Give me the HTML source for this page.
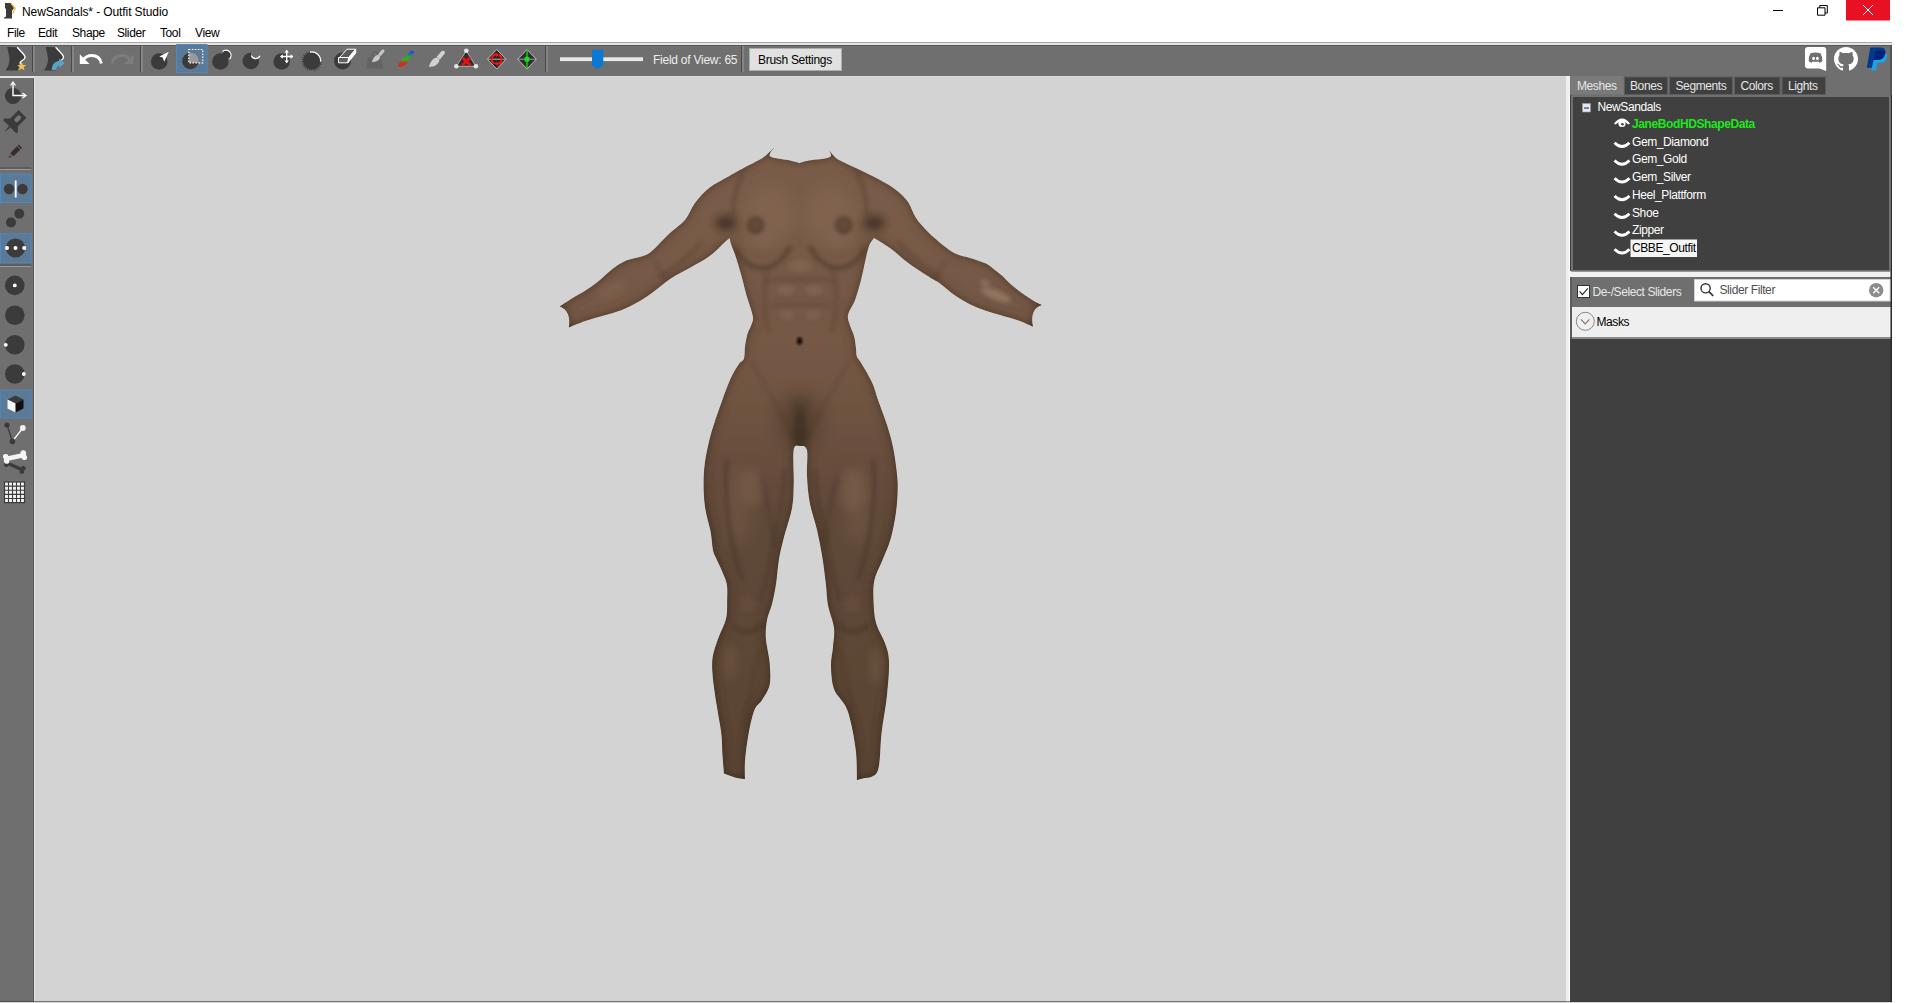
<!DOCTYPE html>
<html><head><meta charset="utf-8">
<style>
*{margin:0;padding:0;box-sizing:border-box}
html,body{width:1920px;height:1003px;overflow:hidden;background:#fff;font-family:"Liberation Sans",sans-serif;font-size:12px;color:#000}
.a{position:absolute;white-space:nowrap;line-height:14px;letter-spacing:-0.4px}
#svg{position:absolute;left:0;top:0}
.tab{color:#e6e6e6}
.tr{color:#fff}
</style></head><body>
<svg id="svg" width="1920" height="1003" viewBox="0 0 1920 1003">
<defs>
<linearGradient id="skin" x1="0" y1="148" x2="0" y2="780" gradientUnits="userSpaceOnUse">
<stop offset="0" stop-color="#7a5d49"/>
<stop offset="0.35" stop-color="#735744"/>
<stop offset="0.6" stop-color="#5f4838"/>
<stop offset="1" stop-color="#5a4434"/>
</linearGradient>
<linearGradient id="rainbow" x1="0" y1="17" x2="0" y2="0" gradientUnits="userSpaceOnUse">
<stop offset="0" stop-color="#e02020"/>
<stop offset="0.25" stop-color="#d03020"/>
<stop offset="0.45" stop-color="#20c020"/>
<stop offset="0.6" stop-color="#20b020"/>
<stop offset="0.8" stop-color="#2060d0"/>
<stop offset="1" stop-color="#2030e0"/>
</linearGradient>
<g id="brush">
<path d="M0,17 C0.5,14 2,11 4.3,9 C5.5,8 6.8,7.6 7.9,7.8 C9.5,8.2 10.5,9.5 10.3,10.8 C10,12.5 8.5,14.3 6.3,15.5 C4.5,16.5 2,16.9 0,17 Z"/>
<path d="M7.6,7 L12.2,1.6 C13,0.6 14.8,0.5 15.6,1.3 C16.2,2 16,3.2 15.2,4.2 L10.8,9.4 Z"/>
</g>
<g id="profile">
<path d="M1.8,0 L11.6,0.3 C14,2.8 17,6 18.6,8 C19.8,9.6 19.6,11.4 18.2,12.5 C17,13.4 15.2,14 14.8,15.3 L14.6,17 L12,23.6 L0,23.6 C2,20.5 3.8,17.5 4,13 C4,8.5 2.3,4 1.8,0 Z" fill="#3b3b3b"/>
<path d="M11.6,0.3 C14,2.8 17,6 18.6,8 C19.8,9.6 19.6,11.4 18.2,12.5 C17,13.4 15.2,14 14.8,15.3 L14.6,17.5" fill="none" stroke="#fff" stroke-width="1.3"/>
</g>
</defs>
<!-- title bar -->
<rect x="0" y="0" width="1920" height="43" fill="#ffffff"/>
<rect x="0" y="42" width="1892" height="1" fill="#a8a8a8"/>
<rect x="0" y="43" width="1892" height="2" fill="#e3e3e3"/>
<!-- toolbar -->
<rect x="0" y="45" width="1892" height="31" fill="#6f6f6f"/>
<rect x="0" y="45" width="1892" height="1" fill="#5a5a5a"/>
<!-- left toolbar -->
<rect x="0" y="76" width="35" height="927" fill="#e2e2e2"/>
<rect x="0" y="78" width="33" height="925" fill="#6f6f6f"/>
<rect x="33" y="78" width="1" height="925" fill="#595959"/>
<!-- viewport -->
<rect x="35" y="76" width="1531" height="927" fill="#d3d3d3"/>
<rect x="1566" y="76" width="4" height="927" fill="#f0f0f0"/>
<rect x="1569" y="95" width="1" height="908" fill="#ffffff"/>
<rect x="35" y="76" width="1531" height="1" fill="#dadada"/>
<!-- right panel -->
<rect x="1570" y="76" width="322" height="927" fill="#404040"/>
<rect x="1570" y="76" width="322" height="19" fill="#6f6f6f"/>
<rect x="1570" y="271" width="322" height="6" fill="#f0f0f0"/>
<rect x="1570" y="277" width="322" height="30" fill="#6f6f6f"/>
<rect x="1570" y="307" width="322" height="30" fill="#efefef"/>
<rect x="1570" y="337" width="322" height="2" fill="#8a8a8a"/>
<rect x="1570" y="277" width="2" height="62" fill="#5c5c5c"/>
<rect x="1890" y="45" width="2" height="50" fill="#555555"/>
<rect x="1890.5" y="95" width="1.5" height="907" fill="#2a2a2a"/>
<rect x="0" y="1001" width="1892" height="1" fill="#333333" opacity="0.6"/>
<rect x="0" y="1002" width="1892" height="1" fill="#d8d8d8"/>
<!-- tree panel -->
<rect x="1572" y="96" width="318" height="175" fill="#404040" stroke="#7b7e82" stroke-width="1.6"/>
<!-- tabs -->
<rect x="1570.5" y="76" width="53" height="18.5" fill="#7a7a7a"/>
<rect x="1624.5" y="77" width="43" height="17.5" fill="#404040" stroke="#5c5c5c" stroke-width="1"/>
<rect x="1669.5" y="77" width="63" height="17.5" fill="#404040" stroke="#5c5c5c" stroke-width="1"/>
<rect x="1734.5" y="77" width="45.5" height="17.5" fill="#404040" stroke="#5c5c5c" stroke-width="1"/>
<rect x="1782" y="77" width="43.5" height="17.5" fill="#404040" stroke="#5c5c5c" stroke-width="1"/>
<filter id="rim" x="-10%" y="-10%" width="120%" height="120%">
<feGaussianBlur in="SourceAlpha" stdDeviation="5" result="b"/>
<feComposite in="SourceAlpha" in2="b" operator="arithmetic" k2="1" k3="-1" result="edge"/>
<feFlood flood-color="#1e140c" flood-opacity="0.75"/>
<feComposite in2="edge" operator="in" result="shade"/>
<feMerge><feMergeNode in="SourceGraphic"/><feMergeNode in="shade"/></feMerge>
</filter>
<filter id="bl1" x="-50%" y="-50%" width="200%" height="200%"><feGaussianBlur stdDeviation="1"/></filter>
<filter id="bl2" x="-50%" y="-50%" width="200%" height="200%"><feGaussianBlur stdDeviation="2"/></filter>
<filter id="bl4" x="-50%" y="-50%" width="200%" height="200%"><feGaussianBlur stdDeviation="4"/></filter>
<filter id="bl8" x="-50%" y="-50%" width="200%" height="200%"><feGaussianBlur stdDeviation="8"/></filter>
<clipPath id="bclip"><path d="M775.5,146.5 C775.5,146.5 767.6,154.0 770.0,156.3 C772.4,158.7 785.1,159.4 790.0,160.6 C794.9,161.8 799.4,163.2 799.4,163.2 C799.4,163.2 803.6,161.7 808.8,160.6 C813.9,159.5 827.4,159.2 830.3,156.8 C833.2,154.5 826.3,146.5 826.3,146.5 C826.3,146.5 830.7,152.7 833.0,155.0 C835.3,157.3 835.5,158.0 840.0,160.5 C844.5,163.0 853.3,166.8 860.0,170.0 C866.7,173.2 874.0,176.7 880.0,180.0 C886.0,183.3 891.3,186.3 896.0,190.0 C900.7,193.7 904.7,197.3 908.0,202.0 C911.3,206.7 912.7,213.0 916.0,218.0 C919.3,223.0 923.3,227.3 928.0,232.0 C932.7,236.7 939.3,242.3 944.0,246.0 C948.7,249.7 952.0,252.0 956.3,254.0 C960.6,256.0 965.1,256.4 970.0,258.0 C974.9,259.6 981.9,261.7 985.9,263.6 C989.9,265.5 991.1,267.2 993.8,269.2 C996.4,271.2 999.1,273.1 1001.8,275.5 C1004.5,277.9 1006.5,280.6 1009.8,283.5 C1013.1,286.4 1017.8,290.2 1021.8,293.1 C1025.8,296.0 1030.5,299.1 1033.8,301.1 C1037.1,303.1 1041.7,305.0 1041.7,305.0 C1041.7,305.0 1037.5,306.8 1036.1,308.3 C1034.6,309.8 1033.7,311.8 1033.0,313.8 C1032.3,315.8 1032.2,318.1 1032.2,320.2 C1032.2,322.3 1033.0,326.6 1033.0,326.6 C1033.0,326.6 1023.0,322.1 1017.8,320.2 C1012.6,318.3 1007.1,317.0 1001.8,315.4 C996.5,313.8 991.2,312.5 985.9,310.7 C980.6,308.9 974.8,306.7 969.9,304.3 C965.0,301.9 960.3,299.0 956.3,296.3 C952.3,293.6 949.0,290.7 946.0,288.3 C943.0,285.9 940.7,283.8 938.0,282.0 C935.3,280.2 935.0,280.7 930.0,277.5 C925.0,274.3 914.7,267.7 908.0,262.8 C901.3,257.9 895.7,252.1 890.0,248.0 C884.3,243.9 874.0,238.0 874.0,238.0 C874.0,238.0 870.5,242.0 869.0,246.0 C867.5,250.0 866.3,256.3 865.0,262.0 C863.7,267.7 862.7,273.7 861.0,280.0 C859.3,286.3 857.2,294.2 855.0,300.0 C852.8,305.8 848.8,310.8 848.0,315.0 C847.2,319.2 849.0,322.0 850.0,325.5 C851.0,329.0 853.0,332.4 854.0,336.0 C855.0,339.6 855.3,343.6 855.8,347.0 C856.3,350.4 856.0,354.1 856.8,356.6 C857.6,359.1 858.8,359.2 860.5,362.0 C862.2,364.8 865.1,369.4 867.2,373.3 C869.3,377.2 871.4,380.9 873.2,385.3 C875.0,389.8 875.7,393.4 878.0,400.0 C880.3,406.6 884.5,417.2 887.0,425.0 C889.5,432.8 891.4,439.5 893.0,447.0 C894.6,454.5 895.7,463.2 896.5,470.0 C897.3,476.8 897.8,481.0 897.7,488.0 C897.6,495.0 897.2,503.5 896.0,512.0 C894.8,520.5 893.0,530.7 890.6,539.0 C888.2,547.3 884.3,555.2 881.6,562.0 C878.9,568.8 875.8,573.5 874.4,580.0 C873.0,586.5 873.2,593.8 873.5,601.0 C873.8,608.2 874.0,615.8 876.0,623.0 C878.0,630.2 883.1,637.5 885.3,644.0 C887.5,650.5 888.7,653.5 889.0,662.0 C889.3,670.5 888.2,683.2 887.0,695.0 C885.8,706.8 883.0,720.3 881.5,733.0 C880.0,745.7 880.5,763.5 877.7,771.0 C874.9,778.5 864.5,778.0 864.5,778.0 C864.5,778.0 857.0,780.0 857.0,780.0 C857.0,780.0 857.0,761.5 856.0,752.0 C855.0,742.5 852.8,730.7 851.0,723.0 C849.2,715.3 848.3,711.7 845.5,706.0 C842.7,700.3 836.4,695.7 834.0,689.0 C831.6,682.3 831.2,673.0 831.0,666.0 C830.8,659.0 832.5,653.3 833.0,647.0 C833.5,640.7 834.8,635.0 834.0,628.0 C833.2,621.0 829.4,612.4 828.0,605.0 C826.6,597.6 826.9,591.8 825.9,583.7 C824.9,575.7 823.8,565.7 822.3,556.7 C820.8,547.7 819.1,538.8 817.0,529.8 C814.9,520.8 811.5,511.8 809.8,502.8 C808.1,493.8 807.5,484.8 807.0,476.0 C806.5,467.2 808.2,455.0 807.0,450.0 C805.8,445.0 802.2,446.0 800.0,446.0 C797.8,446.0 794.6,443.7 793.6,450.0 C792.6,456.3 794.0,474.3 793.7,484.0 C793.4,493.7 793.6,499.2 792.0,508.0 C790.4,516.8 786.2,528.5 784.0,537.0 C781.8,545.5 780.3,551.2 779.0,559.0 C777.7,566.8 777.2,576.5 776.0,584.0 C774.8,591.5 773.5,598.0 772.0,604.0 C770.5,610.0 768.0,614.3 767.0,620.0 C766.0,625.7 765.4,630.9 765.8,638.0 C766.2,645.1 769.0,654.7 769.6,662.5 C770.2,670.3 770.9,678.8 769.6,685.0 C768.3,691.2 764.5,695.8 762.0,700.0 C759.5,704.2 756.6,704.5 754.4,710.0 C752.2,715.5 750.3,724.5 748.7,733.0 C747.1,741.5 745.6,753.3 745.0,761.0 C744.4,768.7 745.0,779.0 745.0,779.0 C745.0,779.0 740.9,778.9 737.4,778.0 C733.9,777.1 724.0,773.4 724.0,773.4 C724.0,773.4 723.0,761.7 722.5,755.0 C722.0,748.3 722.3,741.5 721.3,733.0 C720.3,724.5 717.9,713.5 716.5,704.0 C715.1,694.5 713.3,683.8 712.7,676.0 C712.1,668.2 711.8,663.3 712.7,657.0 C713.7,650.7 716.2,644.3 718.4,638.0 C720.6,631.7 724.5,625.3 726.0,619.0 C727.5,612.7 727.1,605.8 727.2,600.0 C727.3,594.2 727.7,588.8 726.8,584.0 C725.9,579.2 723.7,575.2 722.0,571.0 C720.3,566.8 718.0,562.5 716.5,559.0 C715.0,555.5 714.0,554.5 713.0,550.0 C712.0,545.5 712.0,539.0 710.7,532.0 C709.4,525.0 706.4,516.0 705.2,508.0 C704.0,500.0 703.6,491.7 703.6,484.0 C703.6,476.3 704.0,469.3 705.0,462.0 C706.0,454.7 707.8,446.7 709.4,440.0 C711.0,433.3 712.5,428.7 714.7,422.0 C716.9,415.3 720.5,405.3 722.4,400.0 C724.3,394.7 724.4,394.1 726.0,390.0 C727.6,385.9 729.8,380.0 732.0,375.7 C734.2,371.4 737.0,366.9 739.0,364.0 C741.0,361.1 743.0,361.5 744.0,358.5 C745.0,355.5 744.5,350.1 745.1,346.0 C745.7,341.9 746.5,337.5 747.5,334.0 C748.5,330.5 750.4,328.0 751.3,325.0 C752.2,322.0 753.6,321.1 752.8,316.0 C752.0,310.9 748.2,301.1 746.3,294.4 C744.4,287.7 743.2,282.1 741.4,275.6 C739.6,269.1 737.1,260.9 735.4,255.6 C733.7,250.3 731.9,246.9 731.0,244.0 C730.1,241.1 729.8,238.0 729.8,238.0 C729.8,238.0 728.3,239.0 725.0,242.0 C721.7,245.0 715.8,251.5 710.0,255.8 C704.2,260.1 696.7,263.9 690.0,267.8 C683.3,271.7 676.1,274.9 670.0,279.0 C663.9,283.1 658.2,288.4 653.2,292.1 C648.2,295.8 645.0,298.0 639.8,301.0 C634.6,304.0 627.8,307.6 621.8,310.0 C615.8,312.4 609.9,313.6 603.9,315.4 C597.9,317.2 591.7,318.8 585.9,320.8 C580.1,322.8 568.9,327.5 568.9,327.5 C568.9,327.5 569.4,323.0 569.3,320.8 C569.1,318.6 568.8,316.4 568.0,314.5 C567.2,312.6 565.8,310.5 564.4,309.1 C563.0,307.8 559.9,306.4 559.9,306.4 C559.9,306.4 568.1,301.0 572.4,298.3 C576.7,295.6 581.4,293.3 585.9,290.3 C590.4,287.3 594.9,284.0 599.4,280.4 C603.9,276.8 608.3,272.0 612.8,268.7 C617.3,265.4 621.8,262.6 626.3,260.6 C630.8,258.7 636.1,258.2 639.8,257.0 C643.5,255.8 645.7,255.4 648.7,253.5 C651.7,251.6 654.2,248.8 657.7,245.4 C661.2,242.0 665.5,237.2 670.0,233.0 C674.5,228.8 680.8,225.0 685.0,220.0 C689.2,215.0 690.9,208.4 695.0,203.0 C699.1,197.6 703.8,192.3 709.5,187.8 C715.2,183.3 722.8,179.8 729.4,176.0 C736.0,172.2 744.1,167.8 749.4,165.0 C754.7,162.2 758.0,160.8 761.0,159.0 C764.0,157.2 765.1,156.1 767.5,154.0 C769.9,151.9 775.5,146.5 775.5,146.5Z"/></clipPath>
<path d="M775.5,146.5 C775.5,146.5 767.6,154.0 770.0,156.3 C772.4,158.7 785.1,159.4 790.0,160.6 C794.9,161.8 799.4,163.2 799.4,163.2 C799.4,163.2 803.6,161.7 808.8,160.6 C813.9,159.5 827.4,159.2 830.3,156.8 C833.2,154.5 826.3,146.5 826.3,146.5 C826.3,146.5 830.7,152.7 833.0,155.0 C835.3,157.3 835.5,158.0 840.0,160.5 C844.5,163.0 853.3,166.8 860.0,170.0 C866.7,173.2 874.0,176.7 880.0,180.0 C886.0,183.3 891.3,186.3 896.0,190.0 C900.7,193.7 904.7,197.3 908.0,202.0 C911.3,206.7 912.7,213.0 916.0,218.0 C919.3,223.0 923.3,227.3 928.0,232.0 C932.7,236.7 939.3,242.3 944.0,246.0 C948.7,249.7 952.0,252.0 956.3,254.0 C960.6,256.0 965.1,256.4 970.0,258.0 C974.9,259.6 981.9,261.7 985.9,263.6 C989.9,265.5 991.1,267.2 993.8,269.2 C996.4,271.2 999.1,273.1 1001.8,275.5 C1004.5,277.9 1006.5,280.6 1009.8,283.5 C1013.1,286.4 1017.8,290.2 1021.8,293.1 C1025.8,296.0 1030.5,299.1 1033.8,301.1 C1037.1,303.1 1041.7,305.0 1041.7,305.0 C1041.7,305.0 1037.5,306.8 1036.1,308.3 C1034.6,309.8 1033.7,311.8 1033.0,313.8 C1032.3,315.8 1032.2,318.1 1032.2,320.2 C1032.2,322.3 1033.0,326.6 1033.0,326.6 C1033.0,326.6 1023.0,322.1 1017.8,320.2 C1012.6,318.3 1007.1,317.0 1001.8,315.4 C996.5,313.8 991.2,312.5 985.9,310.7 C980.6,308.9 974.8,306.7 969.9,304.3 C965.0,301.9 960.3,299.0 956.3,296.3 C952.3,293.6 949.0,290.7 946.0,288.3 C943.0,285.9 940.7,283.8 938.0,282.0 C935.3,280.2 935.0,280.7 930.0,277.5 C925.0,274.3 914.7,267.7 908.0,262.8 C901.3,257.9 895.7,252.1 890.0,248.0 C884.3,243.9 874.0,238.0 874.0,238.0 C874.0,238.0 870.5,242.0 869.0,246.0 C867.5,250.0 866.3,256.3 865.0,262.0 C863.7,267.7 862.7,273.7 861.0,280.0 C859.3,286.3 857.2,294.2 855.0,300.0 C852.8,305.8 848.8,310.8 848.0,315.0 C847.2,319.2 849.0,322.0 850.0,325.5 C851.0,329.0 853.0,332.4 854.0,336.0 C855.0,339.6 855.3,343.6 855.8,347.0 C856.3,350.4 856.0,354.1 856.8,356.6 C857.6,359.1 858.8,359.2 860.5,362.0 C862.2,364.8 865.1,369.4 867.2,373.3 C869.3,377.2 871.4,380.9 873.2,385.3 C875.0,389.8 875.7,393.4 878.0,400.0 C880.3,406.6 884.5,417.2 887.0,425.0 C889.5,432.8 891.4,439.5 893.0,447.0 C894.6,454.5 895.7,463.2 896.5,470.0 C897.3,476.8 897.8,481.0 897.7,488.0 C897.6,495.0 897.2,503.5 896.0,512.0 C894.8,520.5 893.0,530.7 890.6,539.0 C888.2,547.3 884.3,555.2 881.6,562.0 C878.9,568.8 875.8,573.5 874.4,580.0 C873.0,586.5 873.2,593.8 873.5,601.0 C873.8,608.2 874.0,615.8 876.0,623.0 C878.0,630.2 883.1,637.5 885.3,644.0 C887.5,650.5 888.7,653.5 889.0,662.0 C889.3,670.5 888.2,683.2 887.0,695.0 C885.8,706.8 883.0,720.3 881.5,733.0 C880.0,745.7 880.5,763.5 877.7,771.0 C874.9,778.5 864.5,778.0 864.5,778.0 C864.5,778.0 857.0,780.0 857.0,780.0 C857.0,780.0 857.0,761.5 856.0,752.0 C855.0,742.5 852.8,730.7 851.0,723.0 C849.2,715.3 848.3,711.7 845.5,706.0 C842.7,700.3 836.4,695.7 834.0,689.0 C831.6,682.3 831.2,673.0 831.0,666.0 C830.8,659.0 832.5,653.3 833.0,647.0 C833.5,640.7 834.8,635.0 834.0,628.0 C833.2,621.0 829.4,612.4 828.0,605.0 C826.6,597.6 826.9,591.8 825.9,583.7 C824.9,575.7 823.8,565.7 822.3,556.7 C820.8,547.7 819.1,538.8 817.0,529.8 C814.9,520.8 811.5,511.8 809.8,502.8 C808.1,493.8 807.5,484.8 807.0,476.0 C806.5,467.2 808.2,455.0 807.0,450.0 C805.8,445.0 802.2,446.0 800.0,446.0 C797.8,446.0 794.6,443.7 793.6,450.0 C792.6,456.3 794.0,474.3 793.7,484.0 C793.4,493.7 793.6,499.2 792.0,508.0 C790.4,516.8 786.2,528.5 784.0,537.0 C781.8,545.5 780.3,551.2 779.0,559.0 C777.7,566.8 777.2,576.5 776.0,584.0 C774.8,591.5 773.5,598.0 772.0,604.0 C770.5,610.0 768.0,614.3 767.0,620.0 C766.0,625.7 765.4,630.9 765.8,638.0 C766.2,645.1 769.0,654.7 769.6,662.5 C770.2,670.3 770.9,678.8 769.6,685.0 C768.3,691.2 764.5,695.8 762.0,700.0 C759.5,704.2 756.6,704.5 754.4,710.0 C752.2,715.5 750.3,724.5 748.7,733.0 C747.1,741.5 745.6,753.3 745.0,761.0 C744.4,768.7 745.0,779.0 745.0,779.0 C745.0,779.0 740.9,778.9 737.4,778.0 C733.9,777.1 724.0,773.4 724.0,773.4 C724.0,773.4 723.0,761.7 722.5,755.0 C722.0,748.3 722.3,741.5 721.3,733.0 C720.3,724.5 717.9,713.5 716.5,704.0 C715.1,694.5 713.3,683.8 712.7,676.0 C712.1,668.2 711.8,663.3 712.7,657.0 C713.7,650.7 716.2,644.3 718.4,638.0 C720.6,631.7 724.5,625.3 726.0,619.0 C727.5,612.7 727.1,605.8 727.2,600.0 C727.3,594.2 727.7,588.8 726.8,584.0 C725.9,579.2 723.7,575.2 722.0,571.0 C720.3,566.8 718.0,562.5 716.5,559.0 C715.0,555.5 714.0,554.5 713.0,550.0 C712.0,545.5 712.0,539.0 710.7,532.0 C709.4,525.0 706.4,516.0 705.2,508.0 C704.0,500.0 703.6,491.7 703.6,484.0 C703.6,476.3 704.0,469.3 705.0,462.0 C706.0,454.7 707.8,446.7 709.4,440.0 C711.0,433.3 712.5,428.7 714.7,422.0 C716.9,415.3 720.5,405.3 722.4,400.0 C724.3,394.7 724.4,394.1 726.0,390.0 C727.6,385.9 729.8,380.0 732.0,375.7 C734.2,371.4 737.0,366.9 739.0,364.0 C741.0,361.1 743.0,361.5 744.0,358.5 C745.0,355.5 744.5,350.1 745.1,346.0 C745.7,341.9 746.5,337.5 747.5,334.0 C748.5,330.5 750.4,328.0 751.3,325.0 C752.2,322.0 753.6,321.1 752.8,316.0 C752.0,310.9 748.2,301.1 746.3,294.4 C744.4,287.7 743.2,282.1 741.4,275.6 C739.6,269.1 737.1,260.9 735.4,255.6 C733.7,250.3 731.9,246.9 731.0,244.0 C730.1,241.1 729.8,238.0 729.8,238.0 C729.8,238.0 728.3,239.0 725.0,242.0 C721.7,245.0 715.8,251.5 710.0,255.8 C704.2,260.1 696.7,263.9 690.0,267.8 C683.3,271.7 676.1,274.9 670.0,279.0 C663.9,283.1 658.2,288.4 653.2,292.1 C648.2,295.8 645.0,298.0 639.8,301.0 C634.6,304.0 627.8,307.6 621.8,310.0 C615.8,312.4 609.9,313.6 603.9,315.4 C597.9,317.2 591.7,318.8 585.9,320.8 C580.1,322.8 568.9,327.5 568.9,327.5 C568.9,327.5 569.4,323.0 569.3,320.8 C569.1,318.6 568.8,316.4 568.0,314.5 C567.2,312.6 565.8,310.5 564.4,309.1 C563.0,307.8 559.9,306.4 559.9,306.4 C559.9,306.4 568.1,301.0 572.4,298.3 C576.7,295.6 581.4,293.3 585.9,290.3 C590.4,287.3 594.9,284.0 599.4,280.4 C603.9,276.8 608.3,272.0 612.8,268.7 C617.3,265.4 621.8,262.6 626.3,260.6 C630.8,258.7 636.1,258.2 639.8,257.0 C643.5,255.8 645.7,255.4 648.7,253.5 C651.7,251.6 654.2,248.8 657.7,245.4 C661.2,242.0 665.5,237.2 670.0,233.0 C674.5,228.8 680.8,225.0 685.0,220.0 C689.2,215.0 690.9,208.4 695.0,203.0 C699.1,197.6 703.8,192.3 709.5,187.8 C715.2,183.3 722.8,179.8 729.4,176.0 C736.0,172.2 744.1,167.8 749.4,165.0 C754.7,162.2 758.0,160.8 761.0,159.0 C764.0,157.2 765.1,156.1 767.5,154.0 C769.9,151.9 775.5,146.5 775.5,146.5Z" fill="url(#skin)" filter="url(#rim)"/>
<g clip-path="url(#bclip)">
<!-- broad highlights -->
<ellipse cx="770" cy="215" rx="26" ry="30" fill="#8a6c57" opacity="0.45" filter="url(#bl8)"/>
<ellipse cx="830" cy="215" rx="26" ry="30" fill="#8a6c57" opacity="0.45" filter="url(#bl8)"/>
<ellipse cx="996" cy="295" rx="16" ry="5" transform="rotate(22 996 295)" fill="#a88c78" opacity="0.55" filter="url(#bl2)"/>
<ellipse cx="985" cy="283" rx="5" ry="3" transform="rotate(22 985 283)" fill="#a88c78" opacity="0.5" filter="url(#bl2)"/>
<ellipse cx="610" cy="290" rx="16" ry="6" transform="rotate(-25 610 290)" fill="#8a6e5a" opacity="0.4" filter="url(#bl4)"/>
<ellipse cx="738" cy="505" rx="14" ry="40" fill="#7a604c" opacity="0.45" filter="url(#bl8)"/>
<ellipse cx="858" cy="505" rx="14" ry="40" fill="#7a604c" opacity="0.45" filter="url(#bl8)"/>


<!-- shadows -->
<ellipse cx="726" cy="223" rx="11" ry="7" fill="#2a1c14" opacity="0.65" filter="url(#bl4)"/>
<ellipse cx="874" cy="223" rx="11" ry="7" fill="#2a1c14" opacity="0.65" filter="url(#bl4)"/>
<path d="M744,170 C736,185 733,200 733,215" fill="none" stroke="#3a2a20" stroke-width="2.5" opacity="0.4" filter="url(#bl2)"/>
<path d="M856,170 C864,185 867,200 867,215" fill="none" stroke="#3a2a20" stroke-width="2.5" opacity="0.4" filter="url(#bl2)"/>
<path d="M735,248 C742,262 752,268 762,268 C775,268 785,258 790,246" fill="none" stroke="#3a2a20" stroke-width="3.5" opacity="0.55" filter="url(#bl2)"/>
<path d="M810,246 C815,258 825,268 838,268 C848,268 858,262 865,248" fill="none" stroke="#3a2a20" stroke-width="3.5" opacity="0.55" filter="url(#bl2)"/>
<path d="M800,164 L800,338" stroke="#3e2c22" stroke-width="1.6" opacity="0.55" filter="url(#bl1)"/>
<path d="M801.6,175 L801.6,250" stroke="#9a7e6a" stroke-width="1" opacity="0.35" filter="url(#bl1)"/>
<path d="M768,268 C763,285 763,305 768,332 M832,268 C838,285 838,305 832,332" fill="none" stroke="#4a3628" stroke-width="2" opacity="0.45" filter="url(#bl2)"/>
<path d="M766,281 C780,276 792,281 800,279 C808,281 820,276 834,281 M770,306 C782,302 792,305 800,304 C808,305 818,302 830,306" fill="none" stroke="#45332a" stroke-width="2" opacity="0.5" filter="url(#bl2)"/>
<path d="M766,279 C780,274 792,279 800,277 C808,279 820,274 834,279 M770,304 C782,300 792,303 800,302 C808,303 818,300 830,304" fill="none" stroke="#9a7e68" stroke-width="1.2" opacity="0.2" filter="url(#bl2)"/>
<ellipse cx="800" cy="266" rx="12" ry="6" fill="#8e725e" opacity="0.4" filter="url(#bl2)"/>
<path d="M800,400 Q790,430 797,448 L803,448 Q810,430 800,400 Z" fill="#2e2018" opacity="0.7" filter="url(#bl4)"/>
<ellipse cx="800" cy="420" rx="22" ry="28" fill="#3e2e22" opacity="0.4" filter="url(#bl8)"/>
<path d="M752,362 C768,392 785,420 797,445 M848,362 C832,392 815,420 803,445" fill="none" stroke="#3a2a20" stroke-width="2.5" opacity="0.2" filter="url(#bl2)"/>
<path d="M727,460 Q722,520 742,580" fill="none" stroke="#3a2a20" stroke-width="3" opacity="0.5" filter="url(#bl2)"/>
<path d="M873,460 Q878,520 858,580" fill="none" stroke="#3a2a20" stroke-width="3" opacity="0.5" filter="url(#bl2)"/>
<path d="M785,470 Q778,540 760,600 M815,470 Q822,540 840,600" fill="none" stroke="#3a2a20" stroke-width="2.5" opacity="0.35" filter="url(#bl2)"/>


<!-- ab highlights -->
<ellipse cx="786" cy="290" rx="9" ry="5" fill="#8e725e" opacity="0.45" filter="url(#bl2)"/>
<ellipse cx="814" cy="290" rx="9" ry="5" fill="#8e725e" opacity="0.45" filter="url(#bl2)"/>
<ellipse cx="787" cy="315" rx="8" ry="5" fill="#8a6e5a" opacity="0.4" filter="url(#bl2)"/>
<ellipse cx="813" cy="315" rx="8" ry="5" fill="#8a6e5a" opacity="0.4" filter="url(#bl2)"/>
<ellipse cx="760" cy="240" rx="14" ry="10" fill="#86695a" opacity="0.35" filter="url(#bl4)"/>
<ellipse cx="840" cy="240" rx="14" ry="10" fill="#86695a" opacity="0.35" filter="url(#bl4)"/>
<!-- arm grooves -->
<path d="M702,242 C690,255 675,268 660,277" fill="none" stroke="#3a2a20" stroke-width="2" opacity="0.4" filter="url(#bl2)"/>
<path d="M898,242 C910,255 925,268 940,277" fill="none" stroke="#3a2a20" stroke-width="2" opacity="0.4" filter="url(#bl2)"/>
<path d="M655,262 C660,272 665,280 672,285 M945,262 C940,272 935,280 928,285" fill="none" stroke="#3a2a20" stroke-width="2" opacity="0.3" filter="url(#bl2)"/>
<!-- leg details -->
<ellipse cx="752" cy="487" rx="11" ry="20" fill="#7e6350" opacity="0.45" filter="url(#bl4)"/>
<ellipse cx="852" cy="490" rx="12" ry="22" fill="#7e6350" opacity="0.45" filter="url(#bl4)"/>
<path d="M762,478 C768,500 770,520 774,545 M838,478 C830,500 826,520 826,545" fill="none" stroke="#3a2a20" stroke-width="2.5" opacity="0.35" filter="url(#bl2)"/>
<ellipse cx="748" cy="604" rx="8" ry="8" fill="#6e5644" opacity="0.4" filter="url(#bl2)"/>
<ellipse cx="852" cy="604" rx="8" ry="8" fill="#6e5644" opacity="0.4" filter="url(#bl2)"/>
<path d="M733,626 C742,634 752,634 764,624 M836,624 C848,634 858,634 868,626" fill="none" stroke="#2e2018" stroke-width="3" opacity="0.35" filter="url(#bl2)"/>
<ellipse cx="730" cy="662" rx="7" ry="18" fill="#7a604c" opacity="0.4" filter="url(#bl4)"/>
<ellipse cx="876" cy="666" rx="7" ry="18" fill="#7a604c" opacity="0.4" filter="url(#bl4)"/>
<path d="M760,650 C752,680 748,700 745,730 M840,650 C848,680 852,700 853,730" fill="none" stroke="#3a2a20" stroke-width="2" opacity="0.3" filter="url(#bl2)"/>
<!-- nipples & navel -->
<circle cx="755.7" cy="225.3" r="7.5" fill="#4a3528" opacity="0.45" filter="url(#bl2)"/>
<circle cx="755.7" cy="225.3" r="7" fill="none" stroke="#3e2c22" stroke-width="2" opacity="0.7" filter="url(#bl2)"/>
<circle cx="843.7" cy="225.3" r="7.5" fill="#4a3528" opacity="0.45" filter="url(#bl2)"/>
<circle cx="843.7" cy="225.3" r="7" fill="none" stroke="#3e2c22" stroke-width="2" opacity="0.7" filter="url(#bl2)"/>
<ellipse cx="799.6" cy="341" rx="2.8" ry="3.8" fill="#1a100a" filter="url(#bl1)"/>
</g>
<!-- separators -->
<g fill="#4a4a4a"><rect x="32" y="46" width="1" height="26"/><rect x="71" y="46" width="1" height="26"/><rect x="140" y="46" width="1" height="26"/><rect x="545" y="46" width="1" height="26"/><rect x="741" y="46" width="1" height="26"/></g>
<g fill="#9a9a9a"><rect x="33.5" y="46" width="1" height="26"/><rect x="72.5" y="46" width="1" height="26"/><rect x="141.5" y="46" width="1" height="26"/><rect x="546.5" y="46" width="1" height="26"/><rect x="742.5" y="46" width="1" height="26"/></g>
<!-- icon1 new project -->
<use href="#profile" x="5.5" y="47"/>
<path d="M21.7,61.8 L23,65 L26.2,65.1 L23.7,67.2 L24.6,70.5 L21.7,68.6 L18.8,70.5 L19.7,67.2 L17.2,65.1 L20.4,65 Z" fill="#f2c14e"/>
<!-- icon2 load -->
<use href="#profile" x="44" y="47"/>
<path d="M51.8,70 C51.8,64.5 55,61.3 59.3,61 L59.3,58.5 L64.6,63.3 L59.3,68 L59.3,65.5 C57.3,65.7 56.6,67.5 56.6,70 Z" fill="#5ea1c8"/>
<!-- undo -->
<path d="M101.3,63.5 C100.5,58.5 97,55.5 91.5,55.5 C88,55.5 85.5,57 83.5,59.5" fill="none" stroke="#fff" stroke-width="2.8"/>
<path d="M79.8,54.2 L79.8,64 L89.5,64 Z" fill="#fff"/>
<!-- redo -->
<path d="M112.2,63.5 C113,58.5 116.5,55.5 122,55.5 C125.5,55.5 128,57 130,59.5" fill="none" stroke="#7d7d7d" stroke-width="2.8"/>
<path d="M133.7,54.2 L133.7,64 L124,64 Z" fill="#7d7d7d"/>
<!-- select brush -->
<circle cx="159.2" cy="61.5" r="8.3" fill="#3b3b3b"/>
<path d="M168.8,51.8 L159.3,56.4 L162.6,57.6 L164.2,61.8 Z" fill="#fff"/>
<!-- mask brush selected -->
<rect x="176.5" y="44.5" width="30.5" height="28" fill="#5b7a97" stroke="#4f89c2" stroke-width="1"/>
<circle cx="190.4" cy="61" r="8.3" fill="#3b3b3b"/>
<path d="M188.8,52.8 A8.3,8.3 0 0 1 198.6,62.8 L188.8,62.8 Z" fill="#9a9a9a"/>
<path d="M188.8,49.5 L202.8,49.5 L202.8,62.8 L188.8,62.8 Z" fill="none" stroke="#fff" stroke-width="1.2" stroke-dasharray="1.6,1.4"/>
<!-- inflate -->
<circle cx="220.4" cy="61.5" r="8.3" fill="#3b3b3b"/>
<circle cx="227" cy="54.3" r="4.3" fill="#3b3b3b"/>
<path d="M222.5,51.5 A5,5 0 1 1 229.5,59" fill="none" stroke="#fff" stroke-width="1.1"/>
<!-- deflate -->
<circle cx="250.8" cy="61" r="8.3" fill="#3b3b3b"/>
<circle cx="255.5" cy="54" r="4.6" fill="#6f6f6f"/>
<path d="M251.3,55.5 A4.6,4.6 0 0 0 259.9,55.8" fill="none" stroke="#fff" stroke-width="1.1"/>
<!-- move -->
<circle cx="281.7" cy="61.5" r="8.3" fill="#3b3b3b"/>
<g stroke="#fff" stroke-width="1.4" fill="none"><path d="M286.7,50.6 L286.7,62.4 M280.8,56.5 L292.6,56.5"/></g>
<g fill="#fff"><path d="M286.7,49.8 L284.5,52.6 L288.9,52.6 Z M286.7,63.2 L284.5,60.4 L288.9,60.4 Z M280,56.5 L282.8,54.3 L282.8,58.7 Z M293.4,56.5 L290.6,54.3 L290.6,58.7 Z"/></g>
<!-- smooth -->
<circle cx="311.8" cy="60.8" r="8.3" fill="#3b3b3b"/>
<path d="M319.70,60.80 L322.74,62.13 L319.47,62.69 L322.22,64.75 L318.80,64.47 L321.01,67.16 L317.71,66.04 L319.32,69.29 L316.29,67.30 L316.98,70.66 L314.60,68.19 L314.51,71.79 L312.75,68.64 L311.80,71.23 L310.85,68.64 L309.20,71.35 L309.00,68.19 L306.53,70.84 L307.31,67.30 L304.47,69.07 L305.89,66.04 L302.50,67.22 L304.80,64.47 L301.97,64.53 L304.13,62.69 L301.01,62.11 L303.90,60.80 L301.23,59.52 L304.13,58.91 L301.57,56.92 L304.80,57.13 L302.77,54.57 L305.89,55.56 L304.89,53.01 L307.31,54.30 L306.87,51.40 L309.00,53.41 L309.24,50.43 L310.85,52.96 L311.80,52.40 L312.75,52.96 L313.81,52.64 L314.60,53.41 L315.70,53.36 L316.29,54.30 L317.37,54.51 L317.71,55.56 L318.71,56.03 L318.80,57.13 L319.65,57.82 L319.47,58.91 L320.14,59.79 Z" fill="#3b3b3b"/>
<path d="M309.8,52.2 A8.9,8.9 0 0 1 320.6,61.8" fill="none" stroke="#fff" stroke-width="1.2"/>
<!-- undiff eraser -->
<circle cx="342.5" cy="61" r="8.5" fill="#3b3b3b"/>
<path d="M339.5,57.5 L347,49.2 L355.8,49.2 L348.6,57.5 Z" fill="#5a5a5a" stroke="#fff" stroke-width="1"/>
<path d="M338.5,57.5 L348.6,57.5 L348,62.8 L338.5,62.8 Z" fill="#606060" stroke="#fff" stroke-width="1"/>
<path d="M348.6,57.5 L355.8,49.2 L355.8,53 L348,62.8 Z" fill="#fff" stroke="#fff" stroke-width="0.8"/>
<!-- weight brush (dim) -->
<path d="M366.2,68.6 L383,68.6 L380.8,57.5 L368.3,57.5 Z" fill="#636363"/>
<circle cx="375" cy="54.2" r="2.6" fill="none" stroke="#636363" stroke-width="1.3"/>
<use href="#brush" x="372" y="49" fill="#c8c8c8" transform="translate(372,49) scale(0.78) translate(-372,-49)"/>
<!-- color brush -->
<use href="#brush" x="398" y="50" fill="url(#rainbow)"/>
<!-- alpha brush -->
<use href="#brush" x="429" y="50" fill="#d2d2d2"/>
<!-- collapse vertex -->
<path d="M466.3,50.8 L456.3,66.3 L475.9,66.3 Z" fill="#303030" stroke="#b8b8b8" stroke-width="0.9"/>
<path d="M462.2,57.5 L470.4,65.3 M470.4,57.5 L462.2,65.3" stroke="#ee1010" stroke-width="2.6"/>
<g fill="#e6e6e6"><circle cx="466.3" cy="50.8" r="2.3"/><circle cx="456.3" cy="66.3" r="2.3"/><circle cx="475.9" cy="66.3" r="2.3"/></g>
<!-- flip edge -->
<path d="M496.7,49.5 L506,59.2 L496.7,69 L487.4,59.2 Z" fill="#1e2626" stroke="#c8c8c8" stroke-width="0.9"/>
<path d="M488,59.2 L505.4,59.2" stroke="#b8d0d0" stroke-width="0.9"/>
<path d="M496.5,54.6 A4.6,4.6 0 0 0 494.5,63.4 M496.9,63.8 A4.6,4.6 0 0 0 498.9,55" fill="none" stroke="#ff1010" stroke-width="2"/>
<path d="M495.6,52.4 L499.4,54.8 L495.8,57 Z M497.8,66 L494,63.6 L497.6,61.4 Z" fill="#ff1010"/>
<!-- split edge -->
<path d="M527,49.5 L536.3,59.2 L527,69 L517.7,59.2 Z" fill="#2e2e2e" stroke="#c8c8c8" stroke-width="0.9"/>
<path d="M518,59.2 L536,59.2" stroke="#bbb" stroke-width="0.8"/>
<path d="M527,50 L527,68.5" stroke="#18c818" stroke-width="1.5"/>
<circle cx="527" cy="59.2" r="2.6" fill="#18e018"/>
<!-- slider -->
<rect x="560" y="57.3" width="83" height="3.8" fill="#e6e8ea"/>
<path d="M592,49.8 L603.3,49.8 L603.3,65.2 L597.65,69 L592,65.2 Z" fill="#0a78d4"/>
<!-- brush settings button -->
<rect x="749.5" y="48.5" width="92" height="22" fill="#e1e1e1" stroke="#adadad" stroke-width="1"/>
<!-- discord -->
<path d="M1808,47.1 L1823.2,47.1 Q1826.2,47.1 1826.2,50.1 L1826.2,71 L1819.5,68.5 L1808,68.5 Q1805,68.5 1805,65.5 L1805,50.1 Q1805,47.1 1808,47.1 Z" fill="#fff"/>
<path d="M1810.5,53.3 Q1815.5,51.8 1820.5,53.3 Q1822.6,56.8 1822.3,61.2 Q1820.8,62.5 1819.3,62.7 L1818.4,61.4 Q1815.5,62.2 1812.6,61.4 L1811.7,62.7 Q1810.2,62.5 1808.7,61.2 Q1808.4,56.8 1810.5,53.3 Z" fill="#6f6f6f"/>
<ellipse cx="1813.6" cy="58.4" rx="1.4" ry="1.6" fill="#fff"/>
<ellipse cx="1817.4" cy="58.4" rx="1.4" ry="1.6" fill="#fff"/>
<!-- github -->
<path transform="translate(1834,47.1) scale(1.5)" fill="#fff" d="M8 0C3.58 0 0 3.58 0 8c0 3.54 2.29 6.53 5.47 7.59.4.07.55-.17.55-.38 0-.19-.01-.82-.01-1.49-2.01.37-2.53-.49-2.69-.94-.09-.23-.48-.94-.82-1.13-.28-.15-.68-.52-.01-.53.63-.01 1.08.58 1.23.82.72 1.21 1.87.87 2.33.66.07-.52.28-.87.51-1.07-1.78-.2-3.64-.89-3.64-3.95 0-.87.31-1.59.82-2.15-.08-.2-.36-1.02.08-2.12 0 0 .67-.21 2.2.82.64-.18 1.32-.27 2-.27.68 0 1.36.09 2 .27 1.53-1.04 2.2-.82 2.2-.82.44 1.1.16 1.92.08 2.12.51.56.82 1.27.82 2.15 0 3.07-1.87 3.75-3.65 3.95.29.25.54.73.54 1.48 0 1.07-.01 1.93-.01 2.2 0 .21.15.46.55.38A8.013 8.013 0 0016 8c0-4.42-3.58-8-8-8z"/>
<!-- paypal -->
<path d="M1870.3,47.5 L1880.5,47.5 C1885.5,47.5 1886,51 1885,54.5 C1884,58.2 1881,60 1876.5,60 L1874,60 L1872.6,67.8 L1866.8,67.8 Z" fill="#003a8c"/>
<path d="M1886,53 C1887.6,54.3 1887.5,57.5 1886.4,59.6 C1885,62.3 1882.5,63 1879.5,63 L1877.3,63 L1876.1,70.6 L1871.2,70.6 L1873.7,60 L1876.5,60 C1881,60 1884,58.2 1885,54.5 Z" fill="#1da1e8"/>
<path d="M1873.7,60 L1876.5,60 C1881,60 1884,58.2 1885,54.5 C1885.3,53.5 1885.4,52.5 1885.3,51.7 C1883.5,50.5 1881,50.5 1878.5,50.5 L1875.5,50.5 Z" fill="#00237a"/>
<!-- title icon -->
<path d="M5,3 L10.7,3 L14,8 L12,10.8 L12,18.6 L4,18.6 L4.2,17.5 L5.3,16.8 L6,16.8 L6,8.6 L5,8.6 Z" fill="#3a3a3a"/>
<path d="M11,3.2 L15.2,8.3 L13.2,12 L13.2,13.8" fill="none" stroke="#f5c040" stroke-width="1.4"/>
<!-- window controls -->
<rect x="1773" y="10" width="10" height="1" fill="#000"/>
<path d="M1817.5,7.8 L1825,7.8 L1825,15.2 L1817.5,15.2 Z M1819.8,7.8 L1819.8,5.5 L1827.3,5.5 L1827.3,13 L1825,13" fill="none" stroke="#000" stroke-width="1"/>
<rect x="1846" y="0" width="44" height="20.5" fill="#e81123"/>
<path d="M1863,5 L1873,15 M1873,5 L1863,15" stroke="#fff" stroke-width="1"/>
<!-- left toolbar -->
<rect x="0" y="167.5" width="31" height="1" fill="#4a4a4a"/><rect x="0" y="169" width="31" height="1" fill="#9a9a9a"/>
<rect x="0" y="264.5" width="31" height="1" fill="#4a4a4a"/><rect x="0" y="266" width="31" height="1" fill="#9a9a9a"/>
<!-- axis -->
<circle cx="13" cy="96" r="8" fill="#3b3b3b"/>
<path d="M13,82.5 L13,95.5 L25.5,95.5" fill="none" stroke="#fff" stroke-width="1.4"/>
<path d="M10.5,85.5 L13,82 L15.5,85.5 M22.5,93 L26,95.5 L22.5,98" fill="none" stroke="#fff" stroke-width="1.2"/>
<!-- pin -->
<g transform="translate(10.5,126) rotate(45)">
<path d="M-5.5,-17 L5.5,-17 L5.5,-5 L9.5,-1 L9.5,1 L-9.5,1 L-9.5,-1 L-5.5,-5 Z" fill="#3b3b3b"/>
<rect x="-2.2" y="-14" width="4.4" height="7.5" rx="2.2" fill="#757575"/>
<path d="M-1.1,1 L1.1,1 L0,9 Z" fill="#3b3b3b"/>
</g>
<!-- pencil -->
<g transform="translate(13.3,153.3) rotate(45) scale(0.9)">
<rect x="-2.6" y="-8.5" width="5.2" height="10.5" fill="#3a2c2a"/>
<rect x="-2.6" y="-11.2" width="5.2" height="1.8" fill="#3a2c2a"/>
<path d="M-2.6,2 L2.6,2 L0,6.5 Z" fill="#5a5a5a"/>
<path d="M-0.9,5 L0.9,5 L0,7.5 Z" fill="#2a2a2a"/>
</g>
<!-- mirror selected -->
<rect x="0.5" y="174" width="30.5" height="28.5" fill="#5b7a97" stroke="#4f89c2" stroke-width="1"/>
<circle cx="9" cy="189" r="5.2" fill="#3b3b3b"/>
<circle cx="22.5" cy="189" r="5.2" fill="#3b3b3b"/>
<rect x="14.8" y="180.5" width="1.8" height="17" fill="#fff"/>
<!-- connected -->
<circle cx="19.3" cy="213.8" r="5" fill="#3b3b3b"/>
<circle cx="11" cy="222.5" r="5" fill="#3b3b3b"/>
<!-- global selected -->
<rect x="0.5" y="233.8" width="30.5" height="28.5" fill="#5b7a97" stroke="#4f89c2" stroke-width="1"/>
<circle cx="15.5" cy="248" r="9.6" fill="#3b3b3b"/>
<g fill="#fff"><circle cx="7" cy="248" r="2"/><circle cx="15.5" cy="248" r="2"/><circle cx="24.2" cy="248" r="2"/></g>
<!-- brush dots -->
<circle cx="14.8" cy="285.4" r="9.8" fill="#3b3b3b"/><circle cx="14.8" cy="285.4" r="1.9" fill="#fff"/>
<circle cx="14.8" cy="315.2" r="9.8" fill="#3b3b3b"/>
<circle cx="14.8" cy="344.8" r="9.8" fill="#3b3b3b"/><circle cx="5.8" cy="344.8" r="1.9" fill="#fff"/>
<circle cx="14.8" cy="374" r="9.8" fill="#3b3b3b"/><circle cx="23.8" cy="374" r="1.9" fill="#fff"/>
<!-- cube selected -->
<rect x="0.5" y="390" width="30.5" height="28" fill="#5b7a97" stroke="#4f89c2" stroke-width="0.8"/>
<path d="M15.6,395.5 L23.5,399.5 L15.6,403.5 L7.5,399.5 Z" fill="#3b3b3b"/>
<path d="M7.5,399.5 L15.6,403.5 L15.6,412.5 L7.5,408.5 Z" fill="#f4f4f4"/>
<path d="M23.5,399.5 L15.6,403.5 L15.6,412.5 L23.5,408.5 Z" fill="#101010"/>
<!-- vertex edges -->
<path d="M7,425 L12.4,441.4" stroke="#3b3b3b" stroke-width="1.3"/>
<path d="M12.4,441.4 L22.8,428" stroke="#fff" stroke-width="1.3"/>
<circle cx="7" cy="425" r="2.6" fill="#3b3b3b"/>
<circle cx="12.4" cy="441.4" r="2.8" fill="#3b3b3b"/>
<circle cx="22.8" cy="428" r="2.9" fill="#f0f0f0"/>
<!-- bones -->
<g transform="translate(14.8,466.5) rotate(24)" fill="#3b3b3b"><rect x="-8" y="-1.7" width="16" height="3.4"/><circle cx="-8.6" cy="-1.9" r="2.3"/><circle cx="-8.6" cy="1.9" r="2.3"/><circle cx="8.6" cy="-1.9" r="2.3"/><circle cx="8.6" cy="1.9" r="2.3"/></g>
<g transform="translate(15,457) rotate(-12)" fill="#f4f4f4"><rect x="-8.5" y="-2.3" width="17" height="4.6"/><circle cx="-9" cy="-2.2" r="2.8"/><circle cx="-9" cy="2.2" r="2.8"/><circle cx="9" cy="-2.2" r="2.8"/><circle cx="9" cy="2.2" r="2.8"/></g>
<!-- grid -->
<rect x="4.5" y="482" width="20" height="20.6" fill="#f4f4f4" stroke="#3b3b3b" stroke-width="1.2"/>
<g stroke="#3b3b3b" stroke-width="1.1"><path d="M4.5,486.1 L24.5,486.1 M4.5,490.3 L24.5,490.3 M4.5,494.4 L24.5,494.4 M4.5,498.5 L24.5,498.5 M8.5,482 L8.5,502.6 M12.5,482 L12.5,502.6 M16.5,482 L16.5,502.6 M20.5,482 L20.5,502.6"/></g>
<!-- minus box -->
<rect x="1582.5" y="103.5" width="8" height="8.5" fill="#e8e8e8" stroke="#999" stroke-width="0.6"/>
<rect x="1584" y="107.4" width="5" height="1.3" fill="#3050a0"/>
<!-- eye open -->
<path d="M1614,123.5 Q1622,113.5 1630,123.5 L1628.3,124.6 Q1622,117.8 1615.7,124.6 Z" fill="#fff"/>
<circle cx="1622" cy="123.5" r="3.6" fill="#fff"/>
<circle cx="1622.4" cy="124.3" r="1.3" fill="#404040"/>
<!-- eye closed -->
<g fill="none" stroke="#fff" stroke-width="2.7" stroke-linecap="butt">
<path d="M1614.5,142.8 Q1622,150.3 1629.5,142.8"/>
<path d="M1614.5,160.5 Q1622,168.0 1629.5,160.5"/>
<path d="M1614.5,178.3 Q1622,185.8 1629.5,178.3"/>
<path d="M1614.5,196.0 Q1622,203.5 1629.5,196.0"/>
<path d="M1614.5,213.8 Q1622,221.3 1629.5,213.8"/>
<path d="M1614.5,231.5 Q1622,239.0 1629.5,231.5"/>
<path d="M1614.5,249.3 Q1622,256.8 1629.5,249.3"/>
</g>
<rect x="1630.5" y="239.5" width="66.5" height="17.5" fill="#f4f4f4"/>
<!-- checkbox -->
<rect x="1577.5" y="285.5" width="12" height="12" fill="#fff" stroke="#333" stroke-width="1"/>
<path d="M1579.6,291.3 L1582.4,294.6 L1587.8,288.3" fill="none" stroke="#222" stroke-width="1.1"/>
<!-- filter box -->
<rect x="1694.5" y="279.5" width="195.5" height="21.5" fill="#fff" stroke="#d4d4d4" stroke-width="1"/>
<circle cx="1705.6" cy="288.3" r="4.6" fill="none" stroke="#333" stroke-width="1.4"/>
<path d="M1708.9,291.6 L1713.2,295.9" stroke="#333" stroke-width="1.6"/>
<circle cx="1876.2" cy="290.2" r="7.2" fill="#8c8c8c"/>
<path d="M1873.2,287.2 L1879.2,293.2 M1879.2,287.2 L1873.2,293.2" stroke="#fff" stroke-width="1.3"/>
<!-- masks circle -->
<circle cx="1585.3" cy="321.3" r="9" fill="none" stroke="#7a7a7a" stroke-width="0.9"/>
<path d="M1581,319.3 L1585.2,323.8 L1589.4,319.3" fill="none" stroke="#7a7a7a" stroke-width="1.2"/>
</svg>
<div class="a" style="left:22px;top:5px;letter-spacing:-0.1px">NewSandals* - Outfit Studio</div>
<div class="a" style="left:7px;top:26px">File</div>
<div class="a" style="left:38px;top:26px">Edit</div>
<div class="a" style="left:72px;top:26px">Shape</div>
<div class="a" style="left:117px;top:26px">Slider</div>
<div class="a" style="left:160px;top:26px">Tool</div>
<div class="a" style="left:195px;top:26px">View</div>
<div class="a" style="left:653px;top:52.5px;color:#ededed;letter-spacing:-0.25px">Field of View: 65</div>
<div class="a" style="left:758px;top:53px;letter-spacing:-0.3px">Brush Settings</div>
<div class="a tab" style="left:1577px;top:78.5px">Meshes</div>
<div class="a tab" style="left:1630px;top:78.5px">Bones</div>
<div class="a tab" style="left:1675.5px;top:78.5px">Segments</div>
<div class="a tab" style="left:1740.5px;top:78.5px">Colors</div>
<div class="a tab" style="left:1788px;top:78.5px">Lights</div>
<div class="a tr" style="left:1597.5px;top:99.5px">NewSandals</div>
<div class="a" style="left:1632px;top:117px;color:#1ee61e;font-weight:bold">JaneBodHDShapeData</div>
<div class="a tr" style="left:1632px;top:134.5px">Gem_Diamond</div>
<div class="a tr" style="left:1632px;top:152.3px">Gem_Gold</div>
<div class="a tr" style="left:1632px;top:170px">Gem_Silver</div>
<div class="a tr" style="left:1632px;top:187.8px">Heel_Plattform</div>
<div class="a tr" style="left:1632px;top:205.5px">Shoe</div>
<div class="a tr" style="left:1632px;top:223.3px">Zipper</div>
<div class="a" style="left:1632px;top:241px">CBBE_Outfit</div>
<div class="a" style="left:1592.5px;top:285px;color:#e8e8e8">De-/Select Sliders</div>
<div class="a" style="left:1719.5px;top:283px;color:#505050">Slider Filter</div>
<div class="a" style="left:1596.5px;top:315px">Masks</div>
</body></html>
